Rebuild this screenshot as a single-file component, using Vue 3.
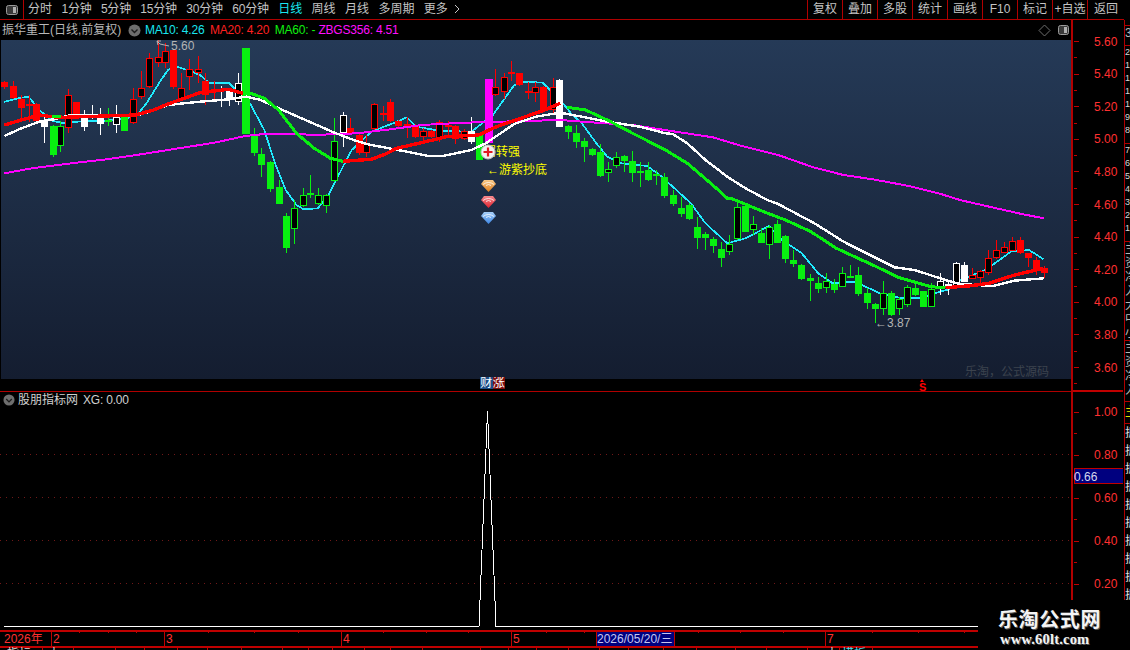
<script setup>
const leftTabs = ['分时', '1分钟', '5分钟', '15分钟', '30分钟', '60分钟', '日线', '周线', '月线', '多周期', '更多']
const rightTabs = ['复权', '叠加', '多股', '统计', '画线', 'F10', '标记', '+自选', '返回']

const A = (p) => pts(p, (x) => x / 2.8, (y) => y / 3)
const B = (p) => pts(p, (x) => x / 2.75 + 560, (y) => y / 3)
const C = (p) => pts(p, (x) => x / 2.75 + 560, (y) => 190 + y / 3)
const D = (p) => pts(p, (x) => x / 2.8, (y) => 130 + y / 3)
function pts(p, fx, fy) {
  const out = []
  for (let i = 0; i < p.length; i += 2) out.push(fx(p[i]).toFixed(1) + ',' + fy(p[i + 1]).toFixed(1))
  return out.join(' ')
}

const magenta = A([12, 520, 90, 505, 200, 490, 300, 478, 400, 462, 500, 445, 600, 428, 687, 408, 740, 402, 900, 404, 1000, 400, 1100, 387, 1180, 375, 1300, 368, 1400, 365, 1568, 360]) + ' ' +
  B([100, 368, 200, 375, 300, 392, 420, 412, 500, 438, 600, 465, 700, 503, 780, 525, 860, 538, 960, 558, 1050, 583]) + ' ' +
  C([1100, 30, 1200, 55, 1270, 72, 1330, 85])
const white = A([12, 408, 60, 385, 110, 365, 150, 358, 190, 347, 300, 345, 380, 347, 420, 335, 470, 315, 560, 305, 640, 298, 690, 290, 730, 300, 780, 325, 860, 362, 930, 395, 990, 420, 1030, 433, 1100, 447, 1200, 468, 1240, 468, 1320, 450, 1360, 430, 1440, 372, 1500, 350, 1568, 338]) + ' ' +
  B([60, 350, 130, 365, 220, 380, 290, 400, 310, 402, 350, 430, 400, 480, 460, 530, 510, 565, 570, 600]) + ' ' +
  C([600, 42, 700, 100, 780, 155, 880, 210, 920, 232, 975, 240, 1060, 270, 1100, 282, 1190, 288, 1250, 272, 1330, 265])
const redSegs = [
  A([12, 375, 60, 360, 110, 345, 145, 350, 180, 352, 380, 345, 430, 330, 470, 312, 560, 278, 640, 268, 680, 280]),
  A([960, 484, 1040, 478, 1080, 462, 1110, 445, 1180, 428, 1250, 410, 1340, 405, 1390, 380, 1450, 358, 1520, 332, 1568, 310]),
  C([1060, 293, 1130, 287, 1180, 280, 1250, 255, 1330, 235])
]
const greenSegs = [
  A([145, 350, 172, 350]),
  A([690, 275, 740, 295, 780, 330, 830, 400, 880, 445, 925, 475, 960, 484]),
  B([20, 322, 70, 330, 130, 360, 200, 400, 290, 450, 350, 490, 420, 555, 460, 595]) + ' ' +
    C([470, 25, 560, 65, 620, 90, 690, 125, 760, 175, 870, 230, 930, 262, 1020, 290, 1060, 293])
]
const cyan = A([12, 305, 50, 295, 80, 290, 110, 330, 145, 362, 180, 370, 215, 365, 300, 362, 380, 350, 410, 310, 445, 250, 470, 210, 495, 200, 530, 212, 560, 225, 585, 248, 640, 248, 680, 290, 700, 310, 740, 390, 770, 490]) + ' ' +
  D([800, 180, 830, 225, 850, 238, 890, 235, 920, 195, 960, 110]) + ' ' +
  A([985, 450, 1040, 395, 1100, 370, 1140, 352, 1165, 380, 1230, 392, 1320, 395, 1380, 345, 1440, 255, 1470, 245, 1520, 248]) + ' ' +
  B([10, 312, 30, 340, 60, 370, 100, 430, 130, 470, 170, 490, 240, 498, 280, 530, 350, 600]) + ' ' +
  C([360, 40, 400, 100, 460, 160, 510, 145, 575, 108, 610, 150, 665, 190, 710, 250, 750, 280, 810, 275, 880, 310, 940, 325, 990, 325, 1030, 310, 1070, 298, 1100, 270, 1170, 240, 1240, 185, 1290, 180, 1330, 208])

// zoomed x, body top, body bottom, wick top, wick bottom, kind
const rawA = [
  [12, 246, 260, 243, 266, 'R'], [35, 258, 294, 243, 296, 'R'], [58, 297, 323, 285, 355, 'R'], [80, 312, 315, 285, 365, 'R'],
  [102, 313, 362, 310, 366, 'R'], [124, 362, 381, 350, 428, 'W'], [147, 378, 465, 376, 472, 'G'], [169, 378, 438, 363, 455, 'g'],
  [191, 285, 385, 268, 400, 'r'], [213, 307, 342, 305, 345, 'R'], [236, 350, 381, 330, 392, 'W'], [258, 349, 351, 315, 358, 'W'],
  [281, 352, 372, 325, 405, 'W'], [303, 361, 364, 325, 378, 'G'], [325, 352, 376, 315, 400, 'w'], [348, 352, 392, 350, 392, 'G'],
  [371, 298, 370, 265, 372, 'r'], [396, 263, 292, 213, 298, 'r'], [418, 175, 262, 160, 265, 'r'], [441, 170, 190, 120, 200, 'r'],
  [463, 152, 190, 130, 205, 'r'], [485, 150, 262, 148, 268, 'R'], [508, 263, 298, 220, 300, 'r'], [530, 208, 232, 178, 270, 'r'],
  [553, 208, 220, 168, 250, 'r'], [575, 243, 285, 218, 315, 'R'], [598, 267, 270, 243, 300, 'R'], [620, 267, 270, 258, 322, 'W'],
  [642, 266, 300, 264, 318, 'W'], [665, 248, 306, 218, 315, 'w'], [687, 144, 402, 144, 402, 'G'], [710, 408, 458, 385, 468, 'G'],
  [732, 462, 494, 445, 530, 'G'], [757, 486, 568, 484, 576, 'G'], [780, 561, 612, 540, 612, 'G'], [802, 648, 744, 639, 759, 'G'],
  [824, 624, 687, 600, 732, 'g'], [847, 585, 618, 564, 620, 'g'], [869, 578, 581, 525, 594, 'G'], [891, 585, 612, 564, 615, 'g'],
  [914, 585, 618, 583, 639, 'g'], [936, 423, 543, 355, 545, 'g'], [959, 346, 398, 337, 440, 'w'], [981, 385, 400, 355, 402, 'R'],
  [1004, 405, 460, 403, 465, 'R'], [1026, 430, 458, 405, 472, 'r'], [1048, 313, 387, 308, 389, 'r'], [1071, 339, 342, 318, 362, 'R'],
  [1093, 306, 362, 298, 365, 'R'], [1115, 362, 378, 360, 380, 'R'], [1140, 371, 374, 350, 415, 'R'], [1163, 375, 412, 373, 414, 'R'],
  [1185, 393, 410, 385, 420, 'r'], [1208, 393, 412, 391, 414, 'R'], [1230, 365, 415, 360, 425, 'r'], [1253, 374, 377, 362, 415, 'R'],
  [1275, 378, 418, 376, 432, 'R'], [1298, 392, 416, 388, 420, 'r'], [1320, 393, 426, 350, 432, 'W'], [1342, 405, 480, 403, 480, 'G'],
  [1365, 237, 430, 237, 430, 'M'], [1387, 260, 286, 208, 288, 'r'], [1410, 232, 277, 218, 298, 'r'], [1432, 215, 218, 182, 243, 'R'],
  [1454, 220, 255, 218, 257, 'R'], [1477, 274, 277, 245, 298, 'R'], [1499, 260, 278, 245, 305, 'r'], [1521, 260, 332, 258, 334, 'R'],
  [1547, 260, 330, 233, 340, 'r'], [1566, 240, 380, 236, 380, 'W']
]
const rawB = [
  [23, 378, 396, 376, 417, 'G'], [45, 400, 425, 375, 445, 'G'], [67, 423, 441, 415, 485, 'G'], [89, 446, 466, 444, 468, 'G'],
  [111, 456, 527, 432, 530, 'G'], [133, 508, 518, 485, 545, 'g'], [155, 470, 497, 455, 505, 'g'], [177, 468, 482, 466, 515, 'G'],
  [199, 484, 518, 452, 545, 'G'], [221, 514, 517, 485, 562, 'G'], [243, 510, 540, 485, 542, 'G'], [265, 521, 524, 510, 555, 'G'],
  [287, 530, 587, 520, 593, 'G']
]
const rawC = [
  [312, 15, 42, 0, 47, 'G'], [334, 55, 72, 20, 82, 'G'], [356, 45, 87, 38, 90, 'G'], [378, 112, 143, 80, 178, 'G'],
  [400, 133, 143, 125, 180, 'G'], [422, 148, 168, 140, 190, 'G'], [444, 178, 203, 155, 230, 'G'], [466, 163, 187, 135, 195, 'g'],
  [488, 50, 148, 40, 150, 'g'], [510, 48, 125, 42, 127, 'G'], [532, 103, 119, 78, 135, 'g'], [554, 128, 158, 115, 160, 'G'],
  [576, 112, 166, 105, 208, 'g'], [598, 102, 158, 90, 160, 'G'], [620, 138, 207, 136, 218, 'G'], [642, 210, 221, 180, 232, 'G'],
  [664, 225, 267, 223, 269, 'G'], [688, 264, 272, 252, 332, 'G'], [710, 280, 297, 262, 308, 'G'], [732, 272, 295, 250, 310, 'g'],
  [754, 282, 300, 268, 310, 'G'], [776, 250, 290, 232, 292, 'g'], [798, 257, 260, 225, 265, 'G'], [820, 255, 312, 232, 318, 'G'],
  [843, 310, 338, 295, 358, 'G'], [865, 342, 358, 340, 398, 'G'], [887, 310, 358, 273, 375, 'g'], [909, 310, 375, 303, 377, 'G'],
  [931, 328, 358, 322, 375, 'g'], [953, 290, 345, 285, 350, 'g'], [975, 295, 315, 280, 317, 'G'], [997, 304, 350, 302, 352, 'G'],
  [1019, 296, 350, 280, 352, 'g'], [1044, 272, 298, 250, 315, 'w'], [1066, 281, 284, 270, 315, 'W'], [1088, 220, 290, 215, 292, 'w'],
  [1110, 225, 275, 215, 277, 'W'], [1132, 256, 266, 235, 268, 'r'], [1154, 244, 265, 240, 282, 'r'], [1176, 203, 250, 180, 255, 'r'],
  [1198, 180, 205, 150, 207, 'r'], [1220, 172, 188, 155, 190, 'r'], [1242, 152, 182, 140, 184, 'r'], [1264, 150, 190, 140, 192, 'R'],
  [1286, 190, 205, 188, 230, 'R'], [1308, 210, 240, 200, 255, 'R'], [1330, 234, 250, 228, 265, 'R']
]
const colors = { R: '#ff0000', r: '#ff0000', G: '#08f010', g: '#08f010', W: '#ffffff', w: '#ffffff', M: '#ff00ff' }
function mk(list, fx, fy) {
  return list.map(([x, t, b, wt, wb, k], i) => {
    const cx = Math.round(fx(x))
    const top = Math.round(fy(t))
    const bot = Math.max(Math.round(fy(b)), top + 2)
    const c = colors[k]
    const hollow = k === 'r' || k === 'g' || k === 'w'
    const wide = k === 'M' || x === 687
    return {
      id: i + '-' + x, c, hollow, wx: cx, wy: Math.round(fy(wt)), wh: Math.max(Math.round(fy(wb)) - Math.round(fy(wt)), 1),
      bx: cx - 3, by: top, bw: wide ? 8 : 7, bh: bot - top
    }
  })
}
const candles = [
  ...mk(rawA, (x) => x / 2.8, (y) => y / 3),
  ...mk(rawB, (x) => x / 2.75 + 560, (y) => y / 3),
  ...mk(rawC, (x) => x / 2.75 + 560, (y) => 190 + y / 3)
]

const priceLabels = [
  ['5.60', 41], ['5.40', 73.6], ['5.20', 106.2], ['5.00', 138.8], ['4.80', 171.4], ['4.60', 204], ['4.40', 236.6], ['4.20', 269.2], ['4.00', 301.8], ['3.80', 334.4], ['3.60', 367]
]
const lowerLabels = [['1.00', 411.7], ['0.80', 454.7], ['0.60', 497.7], ['0.40', 540.7], ['0.20', 583.7]]
const gridY = [454.5, 497.5, 540.5, 583.5]
const minorP = priceLabels.map(([, y]) => Math.round(y + 16.3))
const minorL = lowerLabels.map(([, y]) => Math.round(y + 21.5))

const timeMarks = [[51, '2'], [164, '3'], [341, '4'], [511, '5'], [825, '7']]
const timeTicks = [79, 108, 136, 208, 254, 298, 383, 426, 468, 546, 584, 698, 740, 783, 872, 918, 964]
const tabSeps = [42, 73, 115, 144, 177, 207, 241, 282, 308, 332, 364, 390, 422, 480, 508, 536, 568, 599, 628, 663, 696, 735, 766, 807, 839, 872]

const stripSections = [
  { h: 19, lines: ['33'] },
  { h: 97, lines: ['21.6', '18.4', '15.3', '12.9', '10.7', '9.85', '8.42'], small: true },
  { h: 97, lines: ['7.64', '6.38', '5.12', '4.96', '3.75', '2.81', '1.53'], small: true },
  { h: 98, lines: ['主力', '资金', '净流', '入额', '大单', '中单', '小单'] },
  { h: 60, lines: ['主力', '资金', '净流', '入额'] }
]
const stripRows = 12
</script>

<template>
  <div class="screen">
    <header class="toolbar">
      <div class="layout-btn">
        <svg width="14" height="12" viewBox="0 0 14 12">
          <rect x="1.5" y="1.5" width="11" height="9" rx="2" fill="#3a3a3a" stroke="#9a9a9a" />
          <rect x="8" y="3" width="3" height="6" fill="#b0b0b0" />
        </svg>
      </div>
      <nav class="tabs-left">
        <span v-for="t in leftTabs" :key="t" class="tab" :class="{ active: t === '日线', num: /\d/.test(t) }">{{ t }}<svg v-if="t === '更多'" class="more" width="6" height="10" viewBox="0 0 6 10"><path d="M1 1 L5 5 L1 9" fill="none" stroke="#c4c4c4" /></svg></span>
      </nav>
      <nav class="tabs-right">
        <span v-for="t in rightTabs" :key="t" class="rtab">{{ t }}</span>
      </nav>
    </header>

    <div class="main">
      <section class="charts">
        <div class="legend">
          <span class="stock">振华重工(日线,前复权)</span>
          <svg class="chev" width="13" height="13" viewBox="0 0 13 13">
            <circle cx="6.5" cy="6.5" r="6" fill="#6e6e6e" />
            <path d="M3.5 5.5 L6.5 8.5 L9.5 5.5" fill="none" stroke="#1c1c1c" stroke-width="1.4" />
          </svg>
          <span class="ma c-cyan">MA10: 4.26</span>
          <span class="ma c-red">MA20: 4.20</span>
          <span class="ma c-green">MA60: -</span>
          <span class="ma c-mag">ZBGS356: 4.51</span>
          <span class="legend-icons">
            <svg width="13" height="13" viewBox="0 0 13 13">
              <path d="M6.5 1 L12 6.5 L6.5 12 L1 6.5 Z" fill="none" stroke="#6e6e6e" />
            </svg>
            <svg width="13" height="12" viewBox="0 0 13 12">
              <rect x="1.5" y="1.5" width="10" height="9" rx="2" fill="#3a3a3a" stroke="#9a9a9a" />
              <rect x="7" y="3" width="3" height="6" fill="#b0b0b0" />
            </svg>
          </span>
        </div>

        <svg class="price" width="1072" height="339" viewBox="0 40 1072 339">
          <defs>
            <linearGradient id="bg" x1="0" y1="0" x2="0" y2="1">
              <stop offset="0" stop-color="#253a57" />
              <stop offset="1" stop-color="#141d30" />
            </linearGradient>
            <linearGradient id="gemO" x1="0" y1="0" x2="0" y2="1"><stop offset="0" stop-color="#f7c98a" /><stop offset="1" stop-color="#e07d1c" /></linearGradient>
            <linearGradient id="gemR" x1="0" y1="0" x2="0" y2="1"><stop offset="0" stop-color="#f78a8e" /><stop offset="1" stop-color="#e0202c" /></linearGradient>
            <linearGradient id="gemB" x1="0" y1="0" x2="0" y2="1"><stop offset="0" stop-color="#a6cef7" /><stop offset="1" stop-color="#3c86e6" /></linearGradient>
          </defs>
          <rect x="1" y="40" width="1071" height="339" fill="url(#bg)" />

          <g shape-rendering="crispEdges">
            <polyline :points="cyan" class="ln" stroke="#20ecff" stroke-width="1.7" />
            <g v-for="k in candles" :key="k.id">
              <rect :x="k.wx" :y="k.wy" width="1" :height="k.wh" :fill="k.c" />
              <rect v-if="k.hollow" :x="k.bx + 0.5" :y="k.by + 0.5" :width="k.bw - 1" :height="k.bh - 1" fill="#000" :stroke="k.c" />
              <rect v-else :x="k.bx" :y="k.by" :width="k.bw" :height="k.bh" :fill="k.c" />
            </g>
            <polyline :points="magenta" class="ln" stroke="#ff00ff" stroke-width="2" />
            <polyline :points="white" class="ln" stroke="#ffffff" stroke-width="2.4" />
            <polyline v-for="(s, i) in redSegs" :key="'r' + i" :points="s" class="ln" stroke="#ff0000" stroke-width="3.4" />
            <polyline v-for="(s, i) in greenSegs" :key="'g' + i" :points="s" class="ln" stroke="#08f010" stroke-width="3" />
          </g>

          <text x="171" y="50" class="note">5.60</text>
          <path d="M169 46 L160 44 L157 41 M157 41 L161 41 M157 41 L158 45" fill="none" stroke="#b4b4b4" />
          <text x="875" y="327" class="note">←3.87</text>
          <text x="965" y="376" class="mark-wm">乐淘，公式源码</text>

          <text x="484" y="156" class="signal">弱转强</text>
          <text x="487" y="174" class="signal">←游紫抄底</text>
          <circle cx="488" cy="152" r="7" fill="#f2f2f2" stroke="#bdbdbd" />
          <path d="M488 147.5 V156.5 M483.5 152 H492.5" stroke="#e01a22" stroke-width="2.2" />

          <g v-for="(g, i) in [['#gemO', 180], ['#gemR', 196], ['#gemB', 212]]" :key="i" :transform="`translate(481 ${g[1]})`">
            <path d="M3 0 H12 L15 4 L7.5 12 L0 4 Z" :fill="`url(${g[0]})`" />
            <path d="M2 4.5 Q7.5 0.5 13 4.5 M5 5.5 Q7.5 3.5 10 5.5" fill="none" stroke="#fff" stroke-opacity="0.8" />
          </g>
        </svg>

        <div class="marks">
          <span class="badge blue">财</span>
          <span class="badge maroon">涨</span>
          <span class="s-mark"><i class="tri"></i>S</span>
        </div>

        <div class="lower">
          <div class="lower-legend">
            <svg width="12" height="12" viewBox="0 0 13 13">
              <circle cx="6.5" cy="6.5" r="6" fill="#6e6e6e" />
              <path d="M3.5 5.5 L6.5 8.5 L9.5 5.5" fill="none" stroke="#1c1c1c" stroke-width="1.4" />
            </svg>
            <span>股朋指标网</span>
            <span class="xg">XG: 0.00</span>
          </div>
          <svg width="1072" height="238" viewBox="0 392 1072 238">
            <line v-for="y in gridY" :key="y" x1="0" x2="1072" :y1="y" :y2="y" stroke="#701818" stroke-dasharray="1 5" />
            <polyline shape-rendering="crispEdges" points="4,626.5 479,626.5 479.5,613 487.5,411 495.5,613 496,626.5 978,626.5" fill="none" stroke="#fff" stroke-width="1" />
          </svg>
        </div>
      </section>

      <aside class="axis">
        <svg width="51" height="610" viewBox="1072 20 51 610">
          <g shape-rendering="crispEdges" fill="#c00000">
            <rect v-for="p in priceLabels" :key="p[0]" x="1074" :y="Math.round(p[1])" width="5" height="1" />
            <rect v-for="y in minorP" :key="y" x="1074" :y="y" width="3" height="1" />
            <rect v-for="p in lowerLabels" :key="p[0]" x="1074" :y="Math.round(p[1])" width="5" height="1" />
            <rect v-for="y in minorL" :key="y" x="1074" :y="y" width="3" height="1" />
            <rect x="1072" y="390" width="51" height="2" />
          </g>
          <text v-for="p in priceLabels" :key="p[0]" x="1094" :y="p[1] + 4.5" class="ax">{{ p[0] }}</text>
          <text v-for="p in lowerLabels" :key="p[0]" x="1094" :y="p[1] + 4.5" class="ax">{{ p[0] }}</text>
          <rect x="1074" y="468.5" width="49" height="15" fill="#00007f" stroke="#c00000" shape-rendering="crispEdges" />
          <text x="1074" y="481" class="tag">0.66</text>
        </svg>
      </aside>

      <aside class="strip">
        <div v-for="(s, i) in stripSections" :key="i" class="strip-sec" :style="{ height: s.h + 'px' }">
          <div v-for="(l, j) in s.lines" :key="j" class="strip-line" :class="{ small: s.small }">{{ l }}</div>
        </div>
        <div class="strip-yellow">主</div>
        <div class="strip-rows">
          <div v-for="n in stripRows" :key="n" class="strip-row">振华</div>
        </div>
      </aside>
    </div>

    <footer class="timeaxis">
      <svg width="1130" height="20" viewBox="0 630 1130 20">
        <g shape-rendering="crispEdges" fill="#c00000">
          <rect x="0" y="630" width="1130" height="1.5" />
          <rect x="0" y="646" width="1130" height="1.5" />
          <rect v-for="t in timeMarks" :key="t[0]" :x="t[0]" y="630" width="1" height="17" />
          <rect v-for="x in timeTicks" :key="x" :x="x" y="630" width="1" height="3" />
          <rect v-for="x in tabSeps" :key="x" :x="x" y="647" width="1" height="3" />
        </g>
        <text x="4" y="643" class="tm">2026年</text>
        <text v-for="t in timeMarks" :key="t[1]" :x="t[0] + 2" y="643" class="tm">{{ t[1] }}</text>
        <rect x="596" y="631.5" width="78" height="15" fill="#00007f" stroke="#c00000" shape-rendering="crispEdges" />
        <text x="597" y="643" class="tm-date">2026/05/20/三</text>
        <text x="7" y="658" class="tab-cut">指标</text>
        <text x="48" y="658" class="tab-cut">大</text>
        <text x="826" y="658" class="tab-cut">大</text>
        <text x="842" y="658" class="tab-cut cy">模板</text>
      </svg>
    </footer>

    <div class="brand">
      <div class="brand-cn">乐淘公式网</div>
      <div class="brand-url">www.60lt.com</div>
    </div>
  </div>
</template>

<style scoped>
.screen {
  position: relative;
  width: 1130px;
  height: 650px;
  overflow: hidden;
  background: #000;
  font-family: "Liberation Sans", "Noto Sans CJK SC", sans-serif;
  font-size: 12px;
  color: #c4c4c4;
}
.toolbar {
  display: flex;
  height: 19px;
  width: 1124px;
  border-bottom: 1px solid #b00000;
  line-height: 19px;
}
.layout-btn {
  width: 23px;
  border-right: 1px solid #b00000;
  display: flex;
  align-items: center;
  justify-content: center;
}
.tabs-left {
  display: flex;
  gap: 9.4px;
  padding-left: 4px;
  flex: 1;
  white-space: nowrap;
}
.tab.num { letter-spacing: -0.2px; }
.tab.active { color: #19e6f0; }
.more { margin-left: 6px; vertical-align: -1px; }
.tabs-right { display: flex; }
.rtab {
  width: 34px;
  text-align: center;
  border-left: 1px solid #b00000;
  white-space: nowrap;
}
.rtab:last-child { width: 36px; }
.main { display: flex; height: 610px; }
.charts { width: 1072px; display: flex; flex-direction: column; }
.legend {
  height: 20px;
  display: flex;
  align-items: center;
  padding-left: 2px;
  line-height: 20px;
  white-space: nowrap;
}
.stock { color: #b8b8b8; width: 126px; }
.chev { margin-right: 4px; }
.ma { margin-right: 5.5px; letter-spacing: -0.2px; }
.c-cyan { color: #19e6f0; }
.c-red { color: #ff2020; }
.c-green { color: #10f010; margin-right: 3px; }
.c-mag { color: #ff10ff; }
.legend-icons {
  margin-left: auto;
  margin-right: 2px;
  display: flex;
  gap: 6px;
  align-items: center;
}
.price { display: block; flex: none; }
.ln { fill: none; stroke-linejoin: round; }
.note { fill: #b4b4b4; font-size: 12px; }
.mark-wm { fill: #3c434e; font-size: 12px; }
.signal { fill: #ffff00; font-size: 12px; }
.marks {
  height: 12px;
  border-bottom: 1px solid #b00000;
  display: flex;
  align-items: flex-start;
  padding-left: 480px;
  flex: none;
}
.badge {
  width: 12.5px;
  height: 12px;
  margin-top: -2px;
  line-height: 12px;
  text-align: center;
  color: #fff;
  font-size: 12px;
  overflow: hidden;
}
.blue { background: #1c4c86; }
.maroon { background: #7e0c0c; }
.s-mark {
  margin-left: 414px;
  position: relative;
  color: #ff0000;
  font-weight: 700;
  font-size: 11px;
  line-height: 10px;
  padding-top: 3px;
}
.tri {
  position: absolute;
  left: 1px;
  top: 0;
  width: 0;
  height: 0;
  border-left: 2px solid transparent;
  border-right: 2px solid transparent;
  border-bottom: 3px solid #ff0000;
}
.lower { position: relative; flex: 1; }
.lower svg { display: block; }
.lower-legend {
  position: absolute;
  left: 3px;
  top: 1px;
  display: flex;
  align-items: center;
  gap: 3px;
  color: #d0d0d0;
  line-height: 14px;
  white-space: nowrap;
}
.xg { margin-left: 2px; letter-spacing: -0.2px; }
.axis {
  width: 51px;
  border-left: 2px solid #b00000;
  margin-left: -1px;
  overflow: hidden;
  flex: none;
}
.axis svg { display: block; margin-left: -1px; }
.ax { fill: #ff3030; font-size: 12px; }
.tag { fill: #d6d6ee; font-size: 12px; }
.strip {
  width: 7px;
  flex: none;
  border-left: 1px solid #b00000;
  overflow: hidden;
  padding-top: 5px;
}
.strip-sec {
  border-top: 1px solid #b00000;
  overflow: hidden;
}
.strip-line {
  line-height: 14px;
  white-space: nowrap;
  color: #b8b8b8;
}
.strip-line.small { font-size: 9px; line-height: 13px; color: #d8d8d8; }
.strip-yellow {
  height: 21px;
  border-top: 1px solid #b00000;
  border-bottom: 1px solid #b00000;
  color: #e6e600;
  line-height: 20px;
  overflow: hidden;
}
.strip-row {
  height: 18px;
  line-height: 18px;
  color: #e0e0e0;
  overflow: hidden;
  white-space: nowrap;
}
.timeaxis { height: 20px; }
.timeaxis svg { display: block; }
.tm { fill: #ff3030; font-size: 12px; }
.tm-date { fill: #c6c6f0; font-size: 12px; }
.tab-cut { fill: #d8d8d8; font-size: 12px; }
.tab-cut.cy { fill: #40e0f0; }
.brand {
  position: absolute;
  right: 0;
  bottom: 0;
  width: 152px;
  height: 50px;
  background: #000;
  box-sizing: border-box;
  padding: 9px 0 0 20px;
  color: #f4f4f4;
  font-weight: 700;
  text-shadow: 1px 1px 0 #555;
}
.brand-cn {
  font-size: 20px;
  line-height: 22px;
  letter-spacing: 0.6px;
}
.brand-url {
  font-family: "Liberation Serif", serif;
  font-size: 14.5px;
  line-height: 17px;
  letter-spacing: 0.2px;
  margin-left: 2px;
}
</style>
